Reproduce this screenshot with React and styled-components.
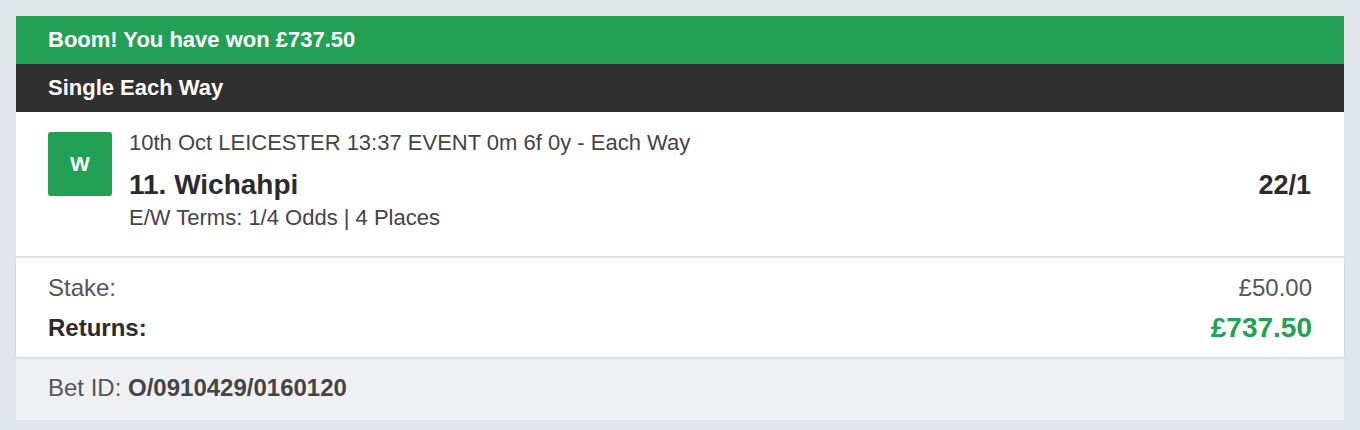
import React from "react";
import styled, { createGlobalStyle } from "styled-components";

const GlobalStyle = createGlobalStyle`
  html, body {
    margin: 0;
    padding: 0;
    background: #e1e6ea;
  }
  body {
    font-family: "Liberation Sans", Arial, Helvetica, sans-serif;
  }
`;

const Page = styled.div`
  padding: 16px;
  padding-bottom: 10px;
`;

const Card = styled.div`
  background: #fff;
`;

const Banner = styled.div`
  height: 48px;
  line-height: 48px;
  padding: 0 32px;
  color: #fff;
  font-size: 22px;
  font-weight: 700;
  background-color: ${props => (props.dark ? "#303030" : "#21a056")};
`;

const Selection = styled.div`
  display: flex;
  align-items: flex-start;
  padding: 19px 33px 26px 32px;
  border-bottom: 2px solid #e1e6ea;
`;

const Badge = styled.div`
  width: 64px;
  height: 64px;
  margin-top: 1px;
  border-radius: 3px;
  background-color: #21a056;
  color: #fff;
  font-size: 21px;
  font-weight: 700;
  display: flex;
  align-items: center;
  justify-content: center;
  flex-shrink: 0;
`;

const Info = styled.div`
  flex: 1;
  margin-left: 17px;
`;

const EventName = styled.div`
  font-size: 22px;
  line-height: 24px;
  color: #444;
`;

const Runner = styled.div`
  margin-top: 13px;
  font-size: 28px;
  line-height: 34px;
  font-weight: 700;
  color: #2b2b2b;
`;

const Terms = styled.div`
  margin-top: 4px;
  font-size: 22px;
  line-height: 24px;
  color: #444;
`;

const Odds = styled.div`
  margin-top: 37px;
  font-size: 27px;
  line-height: 34px;
  font-weight: 700;
  color: #2b2b2b;
`;

const Totals = styled.div`
  position: relative;
  z-index: 1;
  padding: 16px 32px 13px;
  background: #fff;
  box-shadow: 0 1px 2px rgba(0, 0, 0, 0.14);
`;

const TotalRow = styled.div`
  display: flex;
  justify-content: space-between;
  align-items: center;
  margin-top: ${props => (props.strong ? "10px" : "0")};
  height: ${props => (props.strong ? "32px" : "28px")};
  font-size: 24px;
  font-weight: ${props => (props.strong ? 700 : 400)};
  color: ${props => (props.strong ? "#2b2b2b" : "#555")};
`;

const Amount = styled.span`
  font-size: ${props => (props.win ? "28px" : "24px")};
  font-weight: ${props => (props.win ? 700 : 400)};
  color: ${props => (props.win ? "#21a056" : "#555")};
`;

const Footer = styled.div`
  height: 63px;
  line-height: 62px;
  padding: 0 32px;
  background: #eef0f3;
  font-size: 24px;
  color: #555;
  b {
    color: #444;
  }
`;

const App = () => (
  <Page>
    <GlobalStyle />
    <Card>
      <Banner>Boom! You have won £737.50</Banner>
      <Banner dark>Single Each Way</Banner>
      <Selection>
        <Badge>W</Badge>
        <Info>
          <EventName>10th Oct LEICESTER 13:37 EVENT 0m 6f 0y - Each Way</EventName>
          <Runner>11. Wichahpi</Runner>
          <Terms>E/W Terms: 1/4 Odds | 4 Places</Terms>
        </Info>
        <Odds>22/1</Odds>
      </Selection>
      <Totals>
        <TotalRow>
          <span>Stake:</span>
          <Amount>£50.00</Amount>
        </TotalRow>
        <TotalRow strong>
          <span>Returns:</span>
          <Amount win>£737.50</Amount>
        </TotalRow>
      </Totals>
      <Footer>
        Bet ID: <b>O/0910429/0160120</b>
      </Footer>
    </Card>
  </Page>
);

export default App;
